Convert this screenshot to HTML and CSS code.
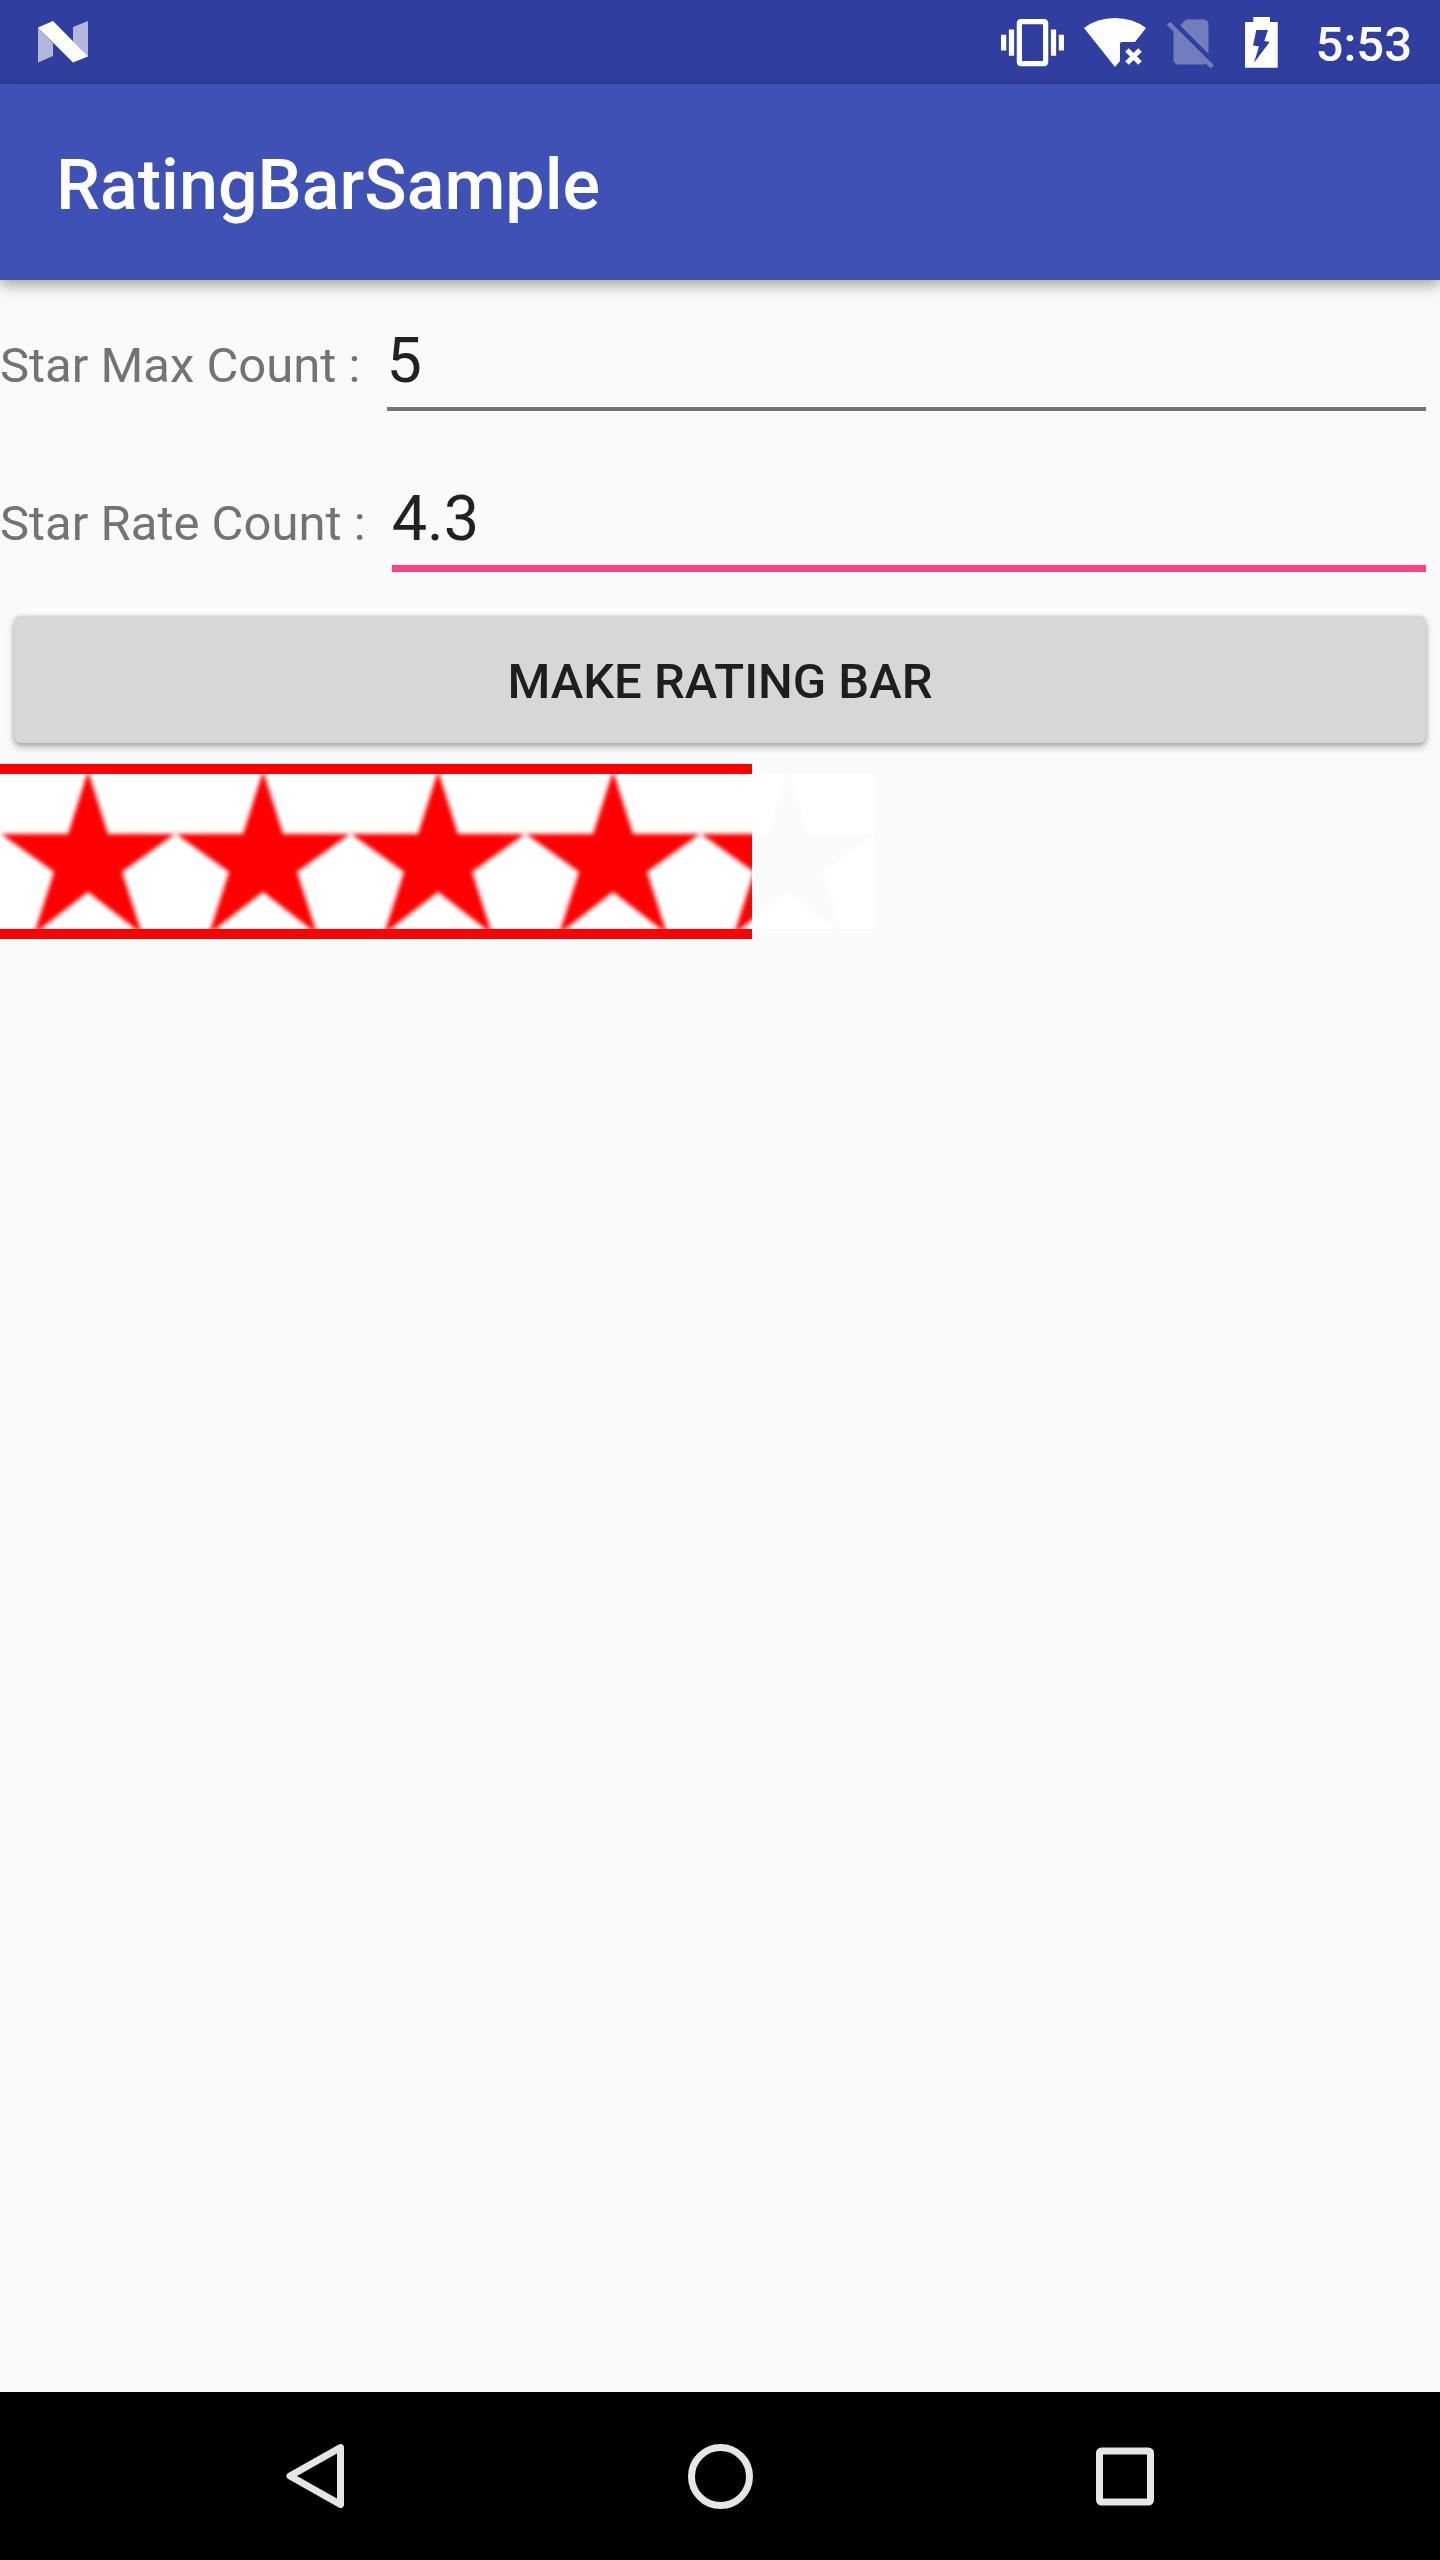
FILE: index.html
```html
<!DOCTYPE html>
<html lang="en">
<head>
  <meta charset="utf-8">
  <meta name="viewport" content="width=device-width, initial-scale=1">
  <title>RatingBarSample</title>
  <link rel="stylesheet" href="styles.css">
</head>
<body>
  <div class="status-bar">
    <svg class="icon-n" viewBox="0 0 50 42" aria-hidden="true">
      <path opacity=".63" d="M0 6.500L15 22v13L0 41.500zM35 6L50 0v36L35 20.500z"/>
      <path d="M0 6.500L15 0l35 35.500-15 6z"/>
    </svg>
    <div class="status-icons">
      <svg class="icon-vibrate" viewBox="0 0 24 24" aria-hidden="true">
        <path d="M0 15h2V9H0v6zm3 2h2V7H3v10zm19-8v6h2V9h-2zm-3 8h2V7h-2v10zM16.500 3h-9C6.670 3 6 3.670 6 4.500v15c0 .83.67 1.500 1.500 1.500h9c.83 0 1.500-.67 1.500-1.500v-15c0-.83-.67-1.500-1.500-1.500zM16 19H8V5h8v14z"/>
      </svg>
      <svg class="icon-wifi" viewBox="0 0 62 50" aria-hidden="true">
        <path d="M0 11Q13 1 31 1t31 10L51 25H38q-2 0-2 2v17l-5 6z"/>
        <path class="wifi-cross" d="M43 33l13 13M56 33L43 46"/>
      </svg>
      <svg class="icon-sim" viewBox="0 0 24 24" aria-hidden="true">
        <path d="M18.990 5c0-1.100-.89-2-1.990-2h-7L7.660 5.340 19 16.680 18.990 5zM3.650 3.880L2.380 5.150 5 7.770V19c0 1.100.9 2 2 2h10.010c.35 0 .67-.1.96-.26l1.880 1.880 1.270-1.270L3.650 3.880z"/>
      </svg>
      <svg class="icon-battery" viewBox="0 0 33 51" aria-hidden="true">
        <path fill-rule="evenodd" d="M8.300 0H25v5h7.700v45.700H0V5h8.300zM11.300 13L8 28.500l6 .8L9 45.700 24.700 25l-5.400-1L23 13z"/>
      </svg>
      <time class="clock">5:53</time>
    </div>
  </div>

  <header class="app-bar">
    <h1 class="app-title">RatingBarSample</h1>
  </header>

  <main class="content">
    <form class="form">
      <div class="field-row">
        <label class="field-label" for="max-count">Star Max Count : </label>
        <input class="field-input" id="max-count" type="text" inputmode="numeric" value="5">
      </div>
      <div class="field-row">
        <label class="field-label" for="rate-count">Star Rate Count : </label>
        <input class="field-input field-input-active" id="rate-count" type="text" inputmode="decimal" value="4.3">
      </div>
      <button class="make-button" type="button">MAKE RATING BAR</button>
    </form>

    <div class="rating" role="img" aria-label="4.3 of 5 stars">
      <svg class="stars stars-empty" viewBox="0 0 875 155" aria-hidden="true">
        <defs>
          <filter id="soften" x="-5%" y="-5%" width="110%" height="110%">
            <feGaussianBlur stdDeviation="2"/>
          </filter>
          <path id="star" d="M88-3L108 60H175L122 98L142 160L88 118L34 160L54 98L1 60H68z"/>
          <g id="star-row" filter="url(#soften)">
            <use href="#star"/>
            <use href="#star" x="175"/>
            <use href="#star" x="350"/>
            <use href="#star" x="525"/>
            <use href="#star" x="700"/>
          </g>
        </defs>
        <use href="#star-row"/>
      </svg>
      <div class="rating-fill" style="width: 752px">
        <svg class="stars stars-filled" viewBox="0 0 875 155" aria-hidden="true">
          <use href="#star-row"/>
        </svg>
      </div>
    </div>
  </main>

  <nav class="nav-bar" aria-label="System">
    <button class="nav-button" type="button" aria-label="Back">
      <svg class="nav-icon" viewBox="0 0 66 66" aria-hidden="true">
        <path d="M58.500 4.500L8 33l50.500 28.500z"/>
      </svg>
    </button>
    <button class="nav-button" type="button" aria-label="Home">
      <svg class="nav-icon" viewBox="0 0 66 66" aria-hidden="true">
        <circle cx="33.500" cy="33.500" r="29"/>
      </svg>
    </button>
    <button class="nav-button" type="button" aria-label="Recent apps">
      <svg class="nav-icon" viewBox="0 0 66 66" aria-hidden="true">
        <rect x="7.500" y="8" width="51" height="51" rx="2"/>
      </svg>
    </button>
  </nav>
</body>
</html>
```

FILE: styles.css
```css
* {
  box-sizing: border-box;
}

body {
  margin: 0;
  min-height: 100vh;
  display: flex;
  flex-direction: column;
  background: #fafafa;
  color: #212121;
  font-family: Roboto, "Noto Sans", sans-serif;
}

svg {
  display: block;
  flex: none;
}

/* Status bar */
.status-bar {
  display: flex;
  align-items: center;
  justify-content: space-between;
  height: 84px;
  padding: 0 28px 0 38px;
  background: #303f9f;
  color: #fff;
  fill: #fff;
}

.icon-n {
  width: 50px;
  height: 42px;
}

.status-icons {
  display: flex;
  align-items: center;
}

.icon-vibrate {
  width: 63px;
  height: 63px;
  margin-right: 20px;
}

.icon-wifi {
  width: 62px;
  height: 50px;
  margin-right: 15px;
}

.wifi-cross {
  fill: none;
  stroke: #fff;
  stroke-width: 5;
}

.icon-sim {
  width: 60px;
  height: 60px;
  margin-right: 24px;
  opacity: 0.32;
}

.icon-battery {
  width: 33px;
  height: 51px;
  margin-right: 38px;
}

.clock {
  padding-top: 5px;
  font-size: 49px;
  font-weight: 500;
  line-height: 58px;
}

/* App bar */
.app-bar {
  display: flex;
  align-items: center;
  height: 196px;
  padding: 6px 56px 0;
  background: #3f51b5;
  color: #fff;
  box-shadow: 0 5px 14px rgba(0, 0, 0, 0.36);
}

.app-title {
  margin: 0;
  font-size: 70px;
  font-weight: 500;
  line-height: 82px;
}

/* Form */
.content {
  flex: 1;
}

.form {
  display: flex;
  flex-direction: column;
}

.field-row {
  display: flex;
  align-items: baseline;
  height: 158px;
  padding-top: 43px;
}

.field-label {
  flex: none;
  color: #737373;
  font-size: 49px;
  line-height: 58px;
  white-space: pre;
}

.field-input {
  flex: 1;
  min-width: 0;
  height: 88px;
  margin: 0 14px;
  padding: 0 0 10px;
  border: 0;
  border-bottom: 4px solid #757575;
  border-radius: 0;
  outline: 0;
  background: transparent;
  color: #212121;
  font: 400 63px/74px Roboto, "Noto Sans", sans-serif;
}

.field-input-active {
  height: 91px;
  border-bottom: 7px solid #ff4081;
}

.make-button {
  height: 127px;
  margin: 20px 14px 21px;
  padding: 5px 0 0;
  border: 0;
  border-radius: 7px;
  background: #d6d7d7;
  color: #1d1e1e;
  font: 500 49px/58px Roboto, "Noto Sans", sans-serif;
  box-shadow: 0 4px 7px rgba(0, 0, 0, 0.3), 0 0 4px rgba(0, 0, 0, 0.14);
}

/* Rating bar */
.rating {
  position: relative;
  width: 875px;
  padding: 10px 0;
}

.stars {
  width: 875px;
  height: 155px;
  background: #fff;
}

.stars-empty {
  fill: #fafafa;
}

.stars-filled {
  fill: #f00;
}

.rating-fill {
  position: absolute;
  top: 0;
  left: 0;
  overflow: hidden;
  border: solid #f00;
  border-width: 10px 0;
}

/* Navigation bar */
.nav-bar {
  display: grid;
  grid-template-columns: repeat(3, 1fr);
  height: 168px;
  padding: 0 112px;
  background: #000;
}

.nav-button {
  display: flex;
  align-items: center;
  justify-content: center;
  padding: 0;
  border: 0;
  background: transparent;
}

.nav-icon {
  width: 66px;
  height: 66px;
  fill: none;
  stroke: #e6e6e6;
  stroke-width: 7;
  stroke-linejoin: round;
}
```
